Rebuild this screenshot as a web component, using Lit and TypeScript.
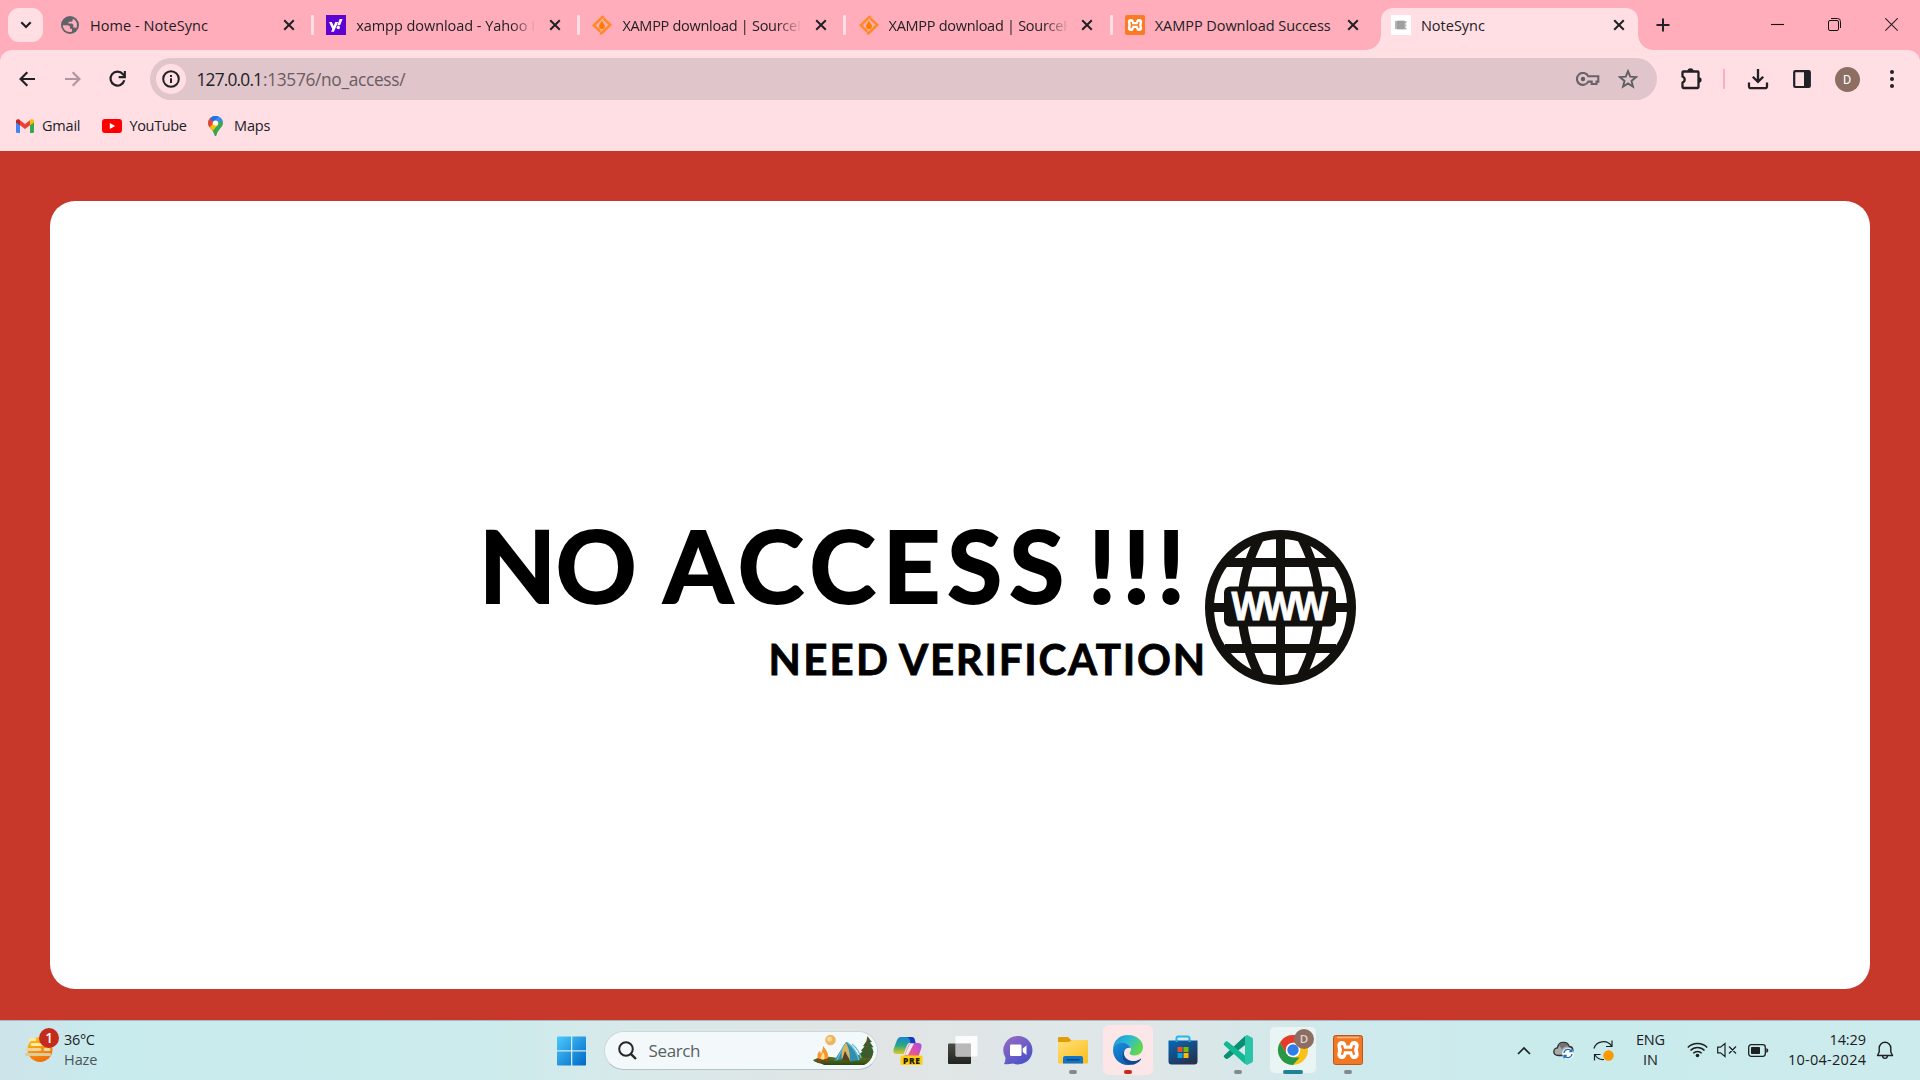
import { LitElement, html, css, svg } from "lit";
import { customElement, property } from "lit/decorators.js";

/** Single line of text, tracked so that its advance fills a given width. */
@customElement("fit-text")
class FitText extends LitElement {
  static styles = css`
    :host { display: inline-block; white-space: pre; flex: none; }
  `;
  @property() text = "";
  @property({ type: Number }) w = 0;
  render() {
    return html`<span class="run">${this.text}</span>`;
  }
  updated() {
    const run = this.renderRoot.querySelector(".run") as HTMLElement;
    this.style.letterSpacing = "0px";
    const natural = run.getBoundingClientRect().width;
    const gaps = Math.max(1, this.text.length - 1);
    this.style.letterSpacing = `${(this.w - natural) / gaps}px`;
    this.style.width = `${this.w}px`;
  }
}

const xampp = (ground: string) => svg`
  <g fill="none" stroke-linecap="round" stroke-linejoin="round">
    <path d="M8.800 10.400l1 4.600-1 4.600M21.200 10.400l-1 4.600 1 4.600M9.300 15h11.400" stroke="#fff" stroke-width="9"/>
    <path d="M10 15h10M9.200 11.200l1 3.800-1 3.800M20.800 11.200l-1 3.800 1 3.800" stroke="${ground}" stroke-width="2.300"/>
  </g>`;

const sourceforge = svg`
  <g fill="none" stroke="#ff8a26" stroke-width="2.600" stroke-linejoin="miter">
    <path d="M12.100 2.200 10.500 1.900 1.800 10.300 8.300 16.600"/>
    <path d="M7.900 18 9.500 18.300 18.200 9.900 11.700 3.600"/>
  </g>
  <path d="M10 5.400c.4 2.400 3 3.400 3 5.900 0 1.700-1.300 3-3 3s-3-1.300-3-3c0-1.600.9-2.200 1.400-3.100.5-.9.400-1.600 1.600-2.800z" fill="#ff8000"/>`;

const favicons: Record<string, unknown> = {
  globe: svg`<svg class="fav" viewBox="0 0 20 20"><circle cx="10" cy="10" r="9" fill="#5f6368"/>
    <path d="M2.900 10.300h4.300c1.800 0 2.800.9 2.800 2.200v1.300h1.900v2.900c-4.500 1.300-9-1.600-9-6.400zM12.700 3.800C15.400 5 17 7.300 17 10c0 1.200-.3 2.300-.9 3.300-.4-.6-.9-.8-1.600-.8h-1.200v-2.100c0-1.200-.8-1.900-2-1.900H8.600V6.800h2.500c1.200 0 1.600-.7 1.600-1.700z" fill="#ffadbb"/></svg>`,
  yahoo: svg`<svg class="fav" viewBox="0 0 20 20"><path d="M0 0h20v20H0z" fill="#5f01d1"/>
    <path d="M3 6.900h2.900l1.700 4.200 1.700-4.200h2.800L7.900 16.700H5.100l1.200-2.700z" fill="#fff"/>
    <path d="M13.600 4h3l-2.500 6.300h-2.800z" fill="#fff"/><circle cx="12.300" cy="12.500" r="1.700" fill="#fff"/></svg>`,
  sf: svg`<svg class="fav" viewBox="0 0 20 20">${sourceforge}</svg>`,
  xampp: svg`<svg class="fav" viewBox="0 0 30 30"><rect width="30" height="30" rx="3" fill="#fb7a24"/>${xampp("#fb7a24")}</svg>`,
  note: svg`<svg class="fav" viewBox="0 0 20 20"><path d="M0 0h20v20H0z" fill="#fff"/>
    <rect x="5.500" y="5.500" width="8.500" height="9" rx="1" fill="#b9b9b9"/><path d="M5.500 7h8M5.500 9h8M5.500 11h8M5.500 13h8M4.800 6v8M14.800 6v2.500M14.800 9.500v2M14.800 12.500v2" stroke="#777" stroke-width=".8"/></svg>`,
};

const tabs = [
  { icon: "globe", text: "Home - NoteSync", w: 118 },
  { icon: "yahoo", text: "xampp download - Yahoo I", w: 179 },
  { icon: "sf", text: "XAMPP download | SourceF", w: 182 },
  { icon: "sf", text: "XAMPP download | SourceF", w: 182 },
  { icon: "xampp", text: "XAMPP Download Success", w: 176 },
  { icon: "note", text: "NoteSync", w: 64, active: true },
];

@customElement("browser-frame")
class BrowserFrame extends LitElement {
  static styles = css`
    :host { display: block; height: 151px; background: #ffadbb; color: #202124;
      font-family: "Open Sans", "Noto Sans", sans-serif; font-size: 14.5px; }
    svg { display: block; flex: none; }
    .strip { display: flex; height: 50px; }
    .search { width: 35px; height: 34px; margin: 8px 6.500px 0 8px; border-radius: 11px; background: #ffdee4;
      display: flex; align-items: center; justify-content: center; }
    .tab { display: flex; align-items: center; width: 266.200px; box-sizing: border-box; padding-left: 10.500px; flex: none; }
    .fav { width: 20px; height: 20px; margin-right: 10px; }
    .title { width: 178px; padding-top: 2px; line-height: 24px; height: 24px; flex: none; }
    .fade { mask-image: linear-gradient(90deg, #000 155px, transparent 180px); }
    .x { width: 12px; height: 12px; margin-left: 14.500px; }
    .sep { width: 3px; height: 20px; border-radius: 1px; background: #ffdee4; margin-left: 16.500px; }
    .active { width: 257.500px; height: 42px; margin: 8px 0 0 .500px; padding-left: 10px; padding-bottom: 8px;
      background: #ffdee4; border-radius: 12px 12px 0 0; position: relative; }
    .active .x { margin-left: 14px; }
    .active::before, .active::after { content: ""; position: absolute; bottom: 0; width: 15px; height: 15px; }
    .active::before { left: -15px; background: radial-gradient(circle at 0 0, transparent 14.500px, #ffdee4 15px); }
    .active::after { right: -15px; background: radial-gradient(circle at 100% 0, transparent 14.500px, #ffdee4 15px); }
    .plus { margin: 18px 0 0 17.500px; width: 14px; height: 14px; }
    .window { margin: 18px 22px 0 auto; display: flex; gap: 44px; }
    .bar { height: 101px; background: #ffdee4; border-radius: 12px 12px 0 0; }
    .tools { display: flex; align-items: center; height: 42px; padding: 8px 0 0 17px; }
    .nav { display: flex; gap: 25.500px; align-items: center; width: 133px; }
    .omni { width: 1507px; height: 42px; box-sizing: border-box; border-radius: 21px; background: #e0c5ca; display: flex;
      align-items: center; padding: 0 19px 0 6px; font-size: 17.300px; }
    .info { width: 30px; height: 30px; border-radius: 50%; background: #ffdee4; display: grid; place-items: center; margin-right: 10.500px; }
    .path { color: #6a5c62; }
    .omni fit-text { padding-top: 1px; }
    .right { margin-left: auto; display: flex; gap: 18px; align-items: center; }
    .ext { margin-left: 23px; }
    .rule { width: 2px; height: 20px; background: #ffadbb; margin: 0 21.500px 0 20px; }
    .panel { margin-left: 24px; }
    .avatar { width: 25px; height: 25px; border-radius: 50%; background: #8d6e63; color: #fff; font: 12.500px/25px Roboto, sans-serif;
      text-align: center; margin: 0 29.500px 0 24px; }
    .marks { display: flex; align-items: center; height: 51px; padding-left: 16px; }
    .marks fit-text { margin-right: 21px; }
    .gap8 { margin-right: 8px; }
    .gap11 { margin-right: 11px; }
  `;
  render() {
    return html`
      <div class="strip">
        <div class="search"><svg width="12" height="8" viewBox="0 0 12 8"><path d="M1.300 1.300 6 6l4.700-4.700" fill="none" stroke="#202124" stroke-width="2.200"/></svg></div>
        ${tabs.map((t, i) => html`
          <div class="tab ${t.active ? "active" : ""}">
            ${favicons[t.icon]}
            <div class="title ${i > 0 && i < 4 ? "fade" : ""}"><fit-text .text=${t.text} .w=${t.w}></fit-text></div>
            <svg class="x" viewBox="0 0 12 12"><path d="M1.200 1.200l9.600 9.600M10.800 1.200 1.200 10.800" stroke="#202124" stroke-width="2"/></svg>
            ${i < 4 ? html`<div class="sep"></div>` : ""}
          </div>`)}
        <svg class="plus" viewBox="0 0 14 14"><path d="M7 .5v13M.5 7h13" stroke="#202124" stroke-width="2"/></svg>
        <div class="window">
          <svg width="13" height="14" viewBox="0 0 13 14"><path d="M0 6.500h13" stroke="#111" stroke-width="1.100"/></svg>
          <svg width="13" height="14" viewBox="0 0 13 14"><g fill="none" stroke="#111"><rect x=".5" y="2.500" width="10" height="10" rx="1.500"/><path d="M3 .5h6.500a3 3 0 0 1 3 3V10"/></g></svg>
          <svg width="13" height="14" viewBox="0 0 13 14"><path d="M.3.300l12.400 12.400M12.700.300.300 12.700" stroke="#222" stroke-width="1.100"/></svg>
        </div>
      </div>
      <div class="bar">
        <div class="tools">
          <div class="nav">
            <svg width="20" height="20" viewBox="0 0 20 20"><path d="M18 10H4M10.300 3.300 3.600 10l6.700 6.700" fill="none" stroke="#202124" stroke-width="2.200"/></svg>
            <svg width="20" height="20" viewBox="0 0 20 20"><path d="M2 10h14M9.700 3.300l6.700 6.700-6.700 6.700" fill="none" stroke="#ae989e" stroke-width="2.200"/></svg>
            <svg width="20" height="20" viewBox="0 0 20 20"><path d="M16.300 11.300A7 7 0 1 1 15 5.200l1.500 1.600" fill="none" stroke="#202124" stroke-width="2.200"/><path d="M17.900 2v7.200h-7.200V7.100h5.100V2z" fill="#202124"/></svg>
          </div>
          <div class="omni">
            <div class="info"><svg width="18" height="18" viewBox="0 0 18 18"><circle cx="9" cy="9" r="7.800" fill="none" stroke="#202124" stroke-width="2"/><path d="M8 8.200h2V13H8zM8 5h2v2H8z" fill="#202124"/></svg></div>
            <fit-text .text=${"127.0.0.1"} .w=${66.5}></fit-text><fit-text class="path" .text=${":13576/no_access/"} .w=${142.5}></fit-text>
            <div class="right">
              <svg width="24" height="14" viewBox="0 0 24 14"><path d="M12.300 4.200h10v5.400h-1.800V12h-4.800V9.600h-3.400A6 6 0 1 1 12.300 4.200z" fill="none" stroke="#6a6266" stroke-width="2.100"/><circle cx="7" cy="7" r="2.200" fill="#5f5f63"/></svg>
              <svg width="20" height="20" viewBox="0 0 20 20"><path d="M10 2.200l2.200 5.500 5.900.4-4.600 3.800 1.500 5.800-5-3.200-5 3.200 1.500-5.800L1.900 8.100l5.900-.4z" fill="none" stroke="#5f6063" stroke-width="1.900"/></svg>
            </div>
          </div>
          <svg class="ext" width="23" height="22" viewBox="0 0 23 22"><path d="M3.500 3.500h14a1 1 0 0 1 1 1v14.500a1 1 0 0 1-1 1h-14a1 1 0 0 1-1-1v-4.300a3.300 3.300 0 0 0 0-6.200V4.500a1 1 0 0 1 1-1z" fill="none" stroke="#202124" stroke-width="2.300"/><path d="M7.500 3.200a3 3 0 0 1 6 0zM18.800 9.200a2.800 2.800 0 0 1 0 5.600z" fill="#202124"/></svg>
          <div class="rule"></div>
          <svg width="22" height="22" viewBox="0 0 22 22"><path d="M2 14.500v4a1.700 1.700 0 0 0 1.700 1.700h14.600a1.700 1.700 0 0 0 1.700-1.700v-4M11 1v12.500M5.800 8.700 11 13.900l5.200-5.200" fill="none" stroke="#202124" stroke-width="2.300"/></svg>
          <svg class="panel" width="18" height="20" viewBox="0 0 18 20"><rect x="1.200" y="2.200" width="15.600" height="15.800" rx="1" fill="none" stroke="#202124" stroke-width="2.200"/><path d="M11 2h6v16h-6z" fill="#202124"/></svg>
          <div class="avatar">D</div>
          <svg width="6" height="20" viewBox="0 0 6 20"><g fill="#202124"><circle cx="3" cy="3" r="2"/><circle cx="3" cy="10" r="2"/><circle cx="3" cy="17" r="2"/></g></svg>
        </div>
        <div class="marks">
          <svg class="gap8" width="18" height="14" viewBox="0 0 18 14"><path d="M0 2h4v12H1.200A1.200 1.200 0 0 1 0 12.800z" fill="#4285f4"/><path d="M14 2h4v10.800a1.200 1.200 0 0 1-1.200 1.200H14z" fill="#34a853"/><path d="M4 1.300 9 5l5-3.700v5L9 10 4 6.300z" fill="#ea4335"/><path d="M0 2C0 .4 2-.4 3.300.6L4 1.200v5.100L0 3.400z" fill="#c5221f"/><path d="M18 2c0-1.600-2-2.400-3.300-1.400l-.7.600v5.100l4-2.900z" fill="#fbbc04"/></svg>
          <fit-text .text=${"Gmail"} .w=${38.5}></fit-text>
          <svg class="gap8" width="20" height="14" viewBox="0 0 20 14"><rect width="20" height="14" rx="3" fill="#f00"/><path d="M7.800 4 13.200 7 7.800 10z" fill="#fff"/></svg>
          <fit-text .text=${"YouTube"} .w=${57.5}></fit-text>
          <svg class="gap11" width="15" height="20" viewBox="0 0 14 20" preserveAspectRatio="none"><defs><clipPath id="pin"><path d="M7 0a7 7 0 0 1 7 7c0 4.500-5 6.200-6 12.200-.3 1.100-1.700 1.100-2 0C5 13.200 0 11.500 0 7a7 7 0 0 1 7-7z"/></clipPath></defs><g clip-path="url(#pin)"><path d="M0 0h14v20H0z" fill="#34a853"/><path d="M0 0h14L7 7z" fill="#4285f4"/><path d="M0 0 7 7 2 13H0z" fill="#ea4335"/><path d="M2 2 5 0h5l-5 6z" fill="#1a73e8"/><path d="M1 12 6 6l4 2-6.500 8z" fill="#fbbc04"/><path d="M9 5l3-4 2 3v2z" fill="#4285f4"/></g><circle cx="7" cy="7" r="2.600" fill="#fff"/></svg>
          <fit-text .text=${"Maps"} .w=${36.5}></fit-text>
        </div>
      </div>`;
  }
}

@customElement("no-access")
class NoAccess extends LitElement {
  static styles = css`
    :host { display: block; height: 869px; background: #c7382a; box-sizing: border-box; padding: 50px 50px 31px; }
    .card { height: 788px; border-radius: 25px; background: #fff; display: flex; box-sizing: border-box; padding: 313px 0 0 428.500px;
      font-family: Lato, "Open Sans", sans-serif; font-weight: 700; color: #000; }
    .words { width: 726.500px; display: flex; flex-direction: column; }
    .big { display: flex; font-size: 100px; line-height: 101px; height: 122.500px; -webkit-text-stroke: 2px #000; }
    .small { display: flex; gap: 11px; font-size: 42px; line-height: 44px; align-self: flex-end; -webkit-text-stroke: .800px #000; }
    .no { margin-left: .500px; }
    .access { margin: 0 24px 0 27px; }
    .world { margin-top: 16px; width: 151px; height: 155px; flex: none; display: block; }
    .www { font: 700 39px "Open Sans", sans-serif; letter-spacing: -3px; }
  `;
  render() {
    return html`<div class="card">
      <div class="words">
        <div class="big">
          <fit-text class="no" .text=${"NO"} .w=${157.5}></fit-text>
          <fit-text class="access" .text=${"ACCESS"} .w=${400.5}></fit-text>
          <fit-text .text=${"!!!"} .w=${97}></fit-text>
        </div>
        <div class="small">
          <fit-text .text=${"NEED"} .w=${119.5}></fit-text>
          <fit-text .text=${"VERIFICATION"} .w=${306}></fit-text>
        </div>
      </div>
      <svg class="world" viewBox="0 0 151 155">
        <g fill="none" stroke="#12110e" stroke-width="9">
          <ellipse cx="75.500" cy="77.500" rx="71" ry="73"/>
          <path d="M75.500 4v147M20 32.500h111M20 118.500h111M5 77.500h141"/>
          <path d="M54 9Q19 77 55 147M97 9Q132 77 96 147"/>
        </g>
        <rect x="19" y="56.500" width="112" height="40" rx="6" fill="#12110e"/>
        <text class="www" transform="translate(26.500 90) scale(.9 1)" fill="#fff" stroke="#fff" stroke-width=".8">WWW</text>
      </svg>
    </div>`;
  }
}

@customElement("task-bar")
class TaskBar extends LitElement {
  static styles = css`
    :host { display: flex; height: 60px; box-sizing: border-box; border-top: 1px solid #aab9bb; align-items: center; color: #1d2022;
      background: linear-gradient(90deg, #cde3e9 0, #c8ebed 100px, #cbebec 480px, #d7e9ea 620px, #e1e4e4 860px, #dfe7e8 1060px, #e0e6e7 1140px, #cfe9ec 1330px, #c9ebec 1560px, #ccebed 1920px);
      font-family: "Open Sans", "Noto Sans", sans-serif; font-size: 14.500px; line-height: 20px; }
    svg { display: block; flex: none; }
    .weather { display: flex; align-items: flex-start; width: 532px; padding-left: 25px; box-sizing: border-box; height: 46px; flex: none; }
    .temp { display: flex; flex-direction: column; padding: 2px 0 0 4px; }
    .haze { color: #4b5559; }
    .app { width: 50px; height: 50px; display: grid; place-items: center; position: relative; border-radius: 6px; margin-right: 5px; flex: none; }
    .app svg { width: 30px; height: 30px; overflow: visible; }
    .dot::after { content: ""; position: absolute; left: 21px; bottom: 1px; width: 8px; height: 4px; border-radius: 2px; background: #838a8b; }
    .edge { background: #fde6e8; }
    .edge::after { background: #c42b1c; }
    .chrome { background: #e9f4f5; box-shadow: inset 0 0 0 1px #d9e5e6; width: 48px; height: 48px; margin: 1px 6px 0 1px; }
    .chrome::after { left: 14px; bottom: 0; width: 20px; background: #1f8295; }
    .find { width: 274px; height: 39px; box-sizing: border-box; border-radius: 20px; background: #f3f9fa; border: 1px solid #cbd8da; border-bottom-color: #b4c2c5;
      display: flex; align-items: center; padding: 0 2px 0 13px; margin: -1px 5.500px 0 16.500px; flex: none; font-size: 17px; color: #5a5f61; }
    .find fit-text { margin-left: 12px; padding-top: 1px; }
    .apps { display: flex; margin-top: -1px; }
    .camp { margin-left: auto; width: 63px; height: 32px; }
    .tray { margin-left: auto; display: flex; align-items: center; padding-right: 26px; flex: none; margin-top: -1px; }
    .lang { display: flex; flex-direction: column; align-items: center; width: 30px; margin: 0 21px 0 22px; }
    .clock { display: flex; flex-direction: column; align-items: flex-end; width: 80px; margin: 0 10px 0 17px; }
    .drive { margin-left: 22px; margin-right: 19px; }
    .vol { margin: 0 11px 0 9.500px; }
  `;
  render() {
    return html`
      <div class="weather">
        <svg width="35" height="36" viewBox="0 0 35 36"><defs><linearGradient id="sun" x1="0" y1="0" x2=".4" y2="1"><stop offset="0" stop-color="#fcc60a"/><stop offset="1" stop-color="#f2700c"/></linearGradient></defs>
          <circle cx="15" cy="21.500" r="12.500" fill="url(#sun)"/>
          <g stroke-width="3" stroke-linecap="round"><path d="M5 11.500h5M7 16.500h12" stroke="#fde9a8"/><path d="M2 21.500h13M20 21.500h4" stroke="#ead6a0"/><path d="M1.500 26.500h23" stroke="#dccb9c"/></g>
          <circle cx="24" cy="10" r="10" fill="#c42b1c"/><text x="24" y="15" text-anchor="middle" fill="#fff" font-size="13.500" font-weight="600">1</text></svg>
        <div class="temp"><fit-text .text=${"36°C"} .w=${31}></fit-text><fit-text class="haze" .text=${"Haze"} .w=${33.5}></fit-text></div>
      </div>
      <svg width="55" height="30" viewBox="0 0 55 30"><defs><linearGradient id="win" x1="0" y1="0" x2="1" y2="1"><stop offset="0" stop-color="#4cc9fd"/><stop offset="1" stop-color="#0067c6"/></linearGradient></defs>
        <path d="M26 .5h13v13.700H25V1.500a1 1 0 0 1 1-1zM40.300.500H53a1 1 0 0 1 1 1v12.700H40.300zM25 15.500h14v14H26a1 1 0 0 1-1-1zM40.300 15.500H54v13a1 1 0 0 1-1 1H40.300z" fill="url(#win)"/></svg>
      <div class="find">
        <svg width="19" height="19" viewBox="0 0 19 19"><circle cx="8" cy="8" r="6.800" fill="none" stroke="#262626" stroke-width="2"/><path d="M12.800 12.800 18 18" stroke="#262626" stroke-width="2.400"/></svg>
        <fit-text .text=${"Search"} .w=${52}></fit-text>
        <svg class="camp" viewBox="0 0 63 32"><defs><linearGradient id="hill" x1="0" y1="0" x2="0" y2="1"><stop offset="0" stop-color="#8fa43a"/><stop offset="1" stop-color="#2c4a10"/></linearGradient></defs>
          <path d="M1 26c8-4 16-4 24-2l28-4c5-3 8-6 8-6 1 7-2 14-9 17H12c-3-2-9-2-11-5z" fill="url(#hill)"/>
          <circle cx="18.500" cy="6" r="5.300" fill="#eeb65c"/><circle cx="17.500" cy="5" r="2.600" fill="#f8d690"/>
          <path d="M55.500 2c2 3 3 4 4.500 6l-2 .3 3.500 5-2 .2 2 4.500-2 6h-8l-4-4 3-2.500-1.500-1 3.500-4-1.500-.5 3.500-5z" fill="#365f2e"/><path d="M55.500 4v24" stroke="#6a4a23" stroke-width="1.200"/>
          <path d="M33.500 8.500 22 27l9-2 3-7 4 9.500 10-1.500c-2-7-7-14-13-18z" fill="#2f8fb0"/><path d="M34 8.500c-4 6-5 11-4 17l4-8 4 10c0-8-1-13-4-19z" fill="#dcb55e"/><path d="M36 9c5 4 9 10 11 17M40 10c5 4 8 10 9 14M32 11l-7 15" stroke="#70bed2" stroke-width="1.200" fill="none"/><path d="M33 17l-3 9 8 1z" fill="#57411f"/>
          <path d="M11 12c4 5 7 9 4 15H7c-3-5-1-9 1-10l1 3c1-3 2-5 2-8z" fill="#f3962b"/><path d="M11 18c2 3 2 6 1 8H9c-1-3 1-5 2-8z" fill="#fbe08a"/><path d="M5 25l12 3M5 28l12-3" stroke="#75421b" stroke-width="1.800"/></svg>
      </div>
      <div class="apps">
      <div class="app"><svg viewBox="0 0 30 30"><defs><linearGradient id="co1" x1="0" y1="0" x2="0" y2="1"><stop offset="0" stop-color="#1785d8"/><stop offset=".5" stop-color="#2ba783"/><stop offset="1" stop-color="#e7c91b"/></linearGradient><linearGradient id="co2" x1="1" y1="0" x2="0" y2="1"><stop offset="0" stop-color="#a94bea"/><stop offset=".5" stop-color="#e0539f"/><stop offset="1" stop-color="#f97c4a"/></linearGradient></defs>
        <path d="M8 2h11c2 0 3 2 3.500 6h-6c-3 0-4 8-6 11H4c-4 0-4-3-3-6L4 5c1-2 2-3 4-3z" fill="url(#co1)"/><path d="M14 2h5c2 0 3 2 3.500 6h-5C17 4 16 3 14 2z" fill="#1439c4"/><path d="M19 8h6c4 0 4 3 3 6l-3 9H10c3-2 4-15 9-15z" fill="url(#co2)"/><path d="M18 8.500h3L15 20h-3c2-4 3-9 6-11.500z" fill="#f4e9f3"/>
        <rect x="7.500" y="20.500" width="22" height="9.500" rx="1.500" fill="#fccf16"/><text x="10" y="28.500" font-size="8.500" font-weight="800" fill="#221b00" textLength="17">PRE</text></svg></div>
      <div class="app"><svg viewBox="0 0 30 30"><defs><linearGradient id="tv" x1="0" y1="0" x2="0" y2="1"><stop offset="0" stop-color="#4a4a48"/><stop offset="1" stop-color="#22221f"/></linearGradient></defs>
        <rect x="0" y="8.500" width="23" height="20.500" rx="1" fill="url(#tv)"/><rect x="7.500" y="1" width="22" height="20.500" rx="1" fill="#fff" opacity=".85"/><path d="M8 8.500h15v13H8z" fill="#b9b9b9"/></svg></div>
      <div class="app"><svg viewBox="0 0 30 30"><defs><linearGradient id="chat" x1="0" y1="0" x2=".7" y2="1"><stop offset="0" stop-color="#9a6bc4"/><stop offset="1" stop-color="#4a53c8"/></linearGradient></defs>
        <path d="M15 1a14.200 14.200 0 1 1-5 27.400c-3 .8-6 1-9 .6 1-2 1.500-3 1.400-6.500A14.200 14.200 0 0 1 15 1z" fill="url(#chat)"/><rect x="7" y="9.500" width="11.500" height="11.500" rx="1.200" fill="#fff"/><path d="M19.700 13.500 23.500 10.500v9.500l-3.800-3z" fill="#fff"/></svg></div>
      <div class="app dot"><svg viewBox="0 0 30 30"><defs><linearGradient id="fold" x1="0" y1="0" x2=".8" y2="1"><stop offset="0" stop-color="#ffe078"/><stop offset="1" stop-color="#fbbf22"/></linearGradient></defs>
        <path d="M0 3.500C0 2.600.6 2 1.500 2H10l3 3h17v6H0z" fill="#e29d05"/><path d="M0 7h11l3-2h16v22.500a1 1 0 0 1-1 1H1a1 1 0 0 1-1-1z" fill="url(#fold)"/><path d="M5 28.500V23a2 2 0 0 1 2-2h16a2 2 0 0 1 2 2v5.500z" fill="#1274c9"/><path d="M8.500 24.800h13" stroke="#0a3f78" stroke-width="1.300"/></svg></div>
      <div class="app dot edge"><svg viewBox="0 0 30 30"><defs><linearGradient id="e1" x1="0" y1="0" x2="1" y2=".5"><stop offset="0" stop-color="#1b95d4"/><stop offset=".5" stop-color="#2bb9d6"/><stop offset="1" stop-color="#62d94b"/></linearGradient><linearGradient id="e2" x1="0" y1="0" x2=".6" y2="1"><stop offset="0" stop-color="#1b8fdd"/><stop offset="1" stop-color="#0c5fae"/></linearGradient></defs>
        <path d="M0 15C0 6 6 0 15 0s15 6 15 12c0 5-4 8.500-8.500 8.500-3.500 0-5-1.500-5-2.500 0-.8 1.500-1.500 1.500-3.500 0-3-3-5.500-8-5.500C4 9 1 12 0 15z" fill="url(#e1)"/><path d="M0 15c1-5 6-8 11-7 3.500.7 6 3 6.500 5-4-1-7 2-6.500 6.500.5 5 5 9.500 9 9.300C18 30 16 30 15 30 6 30 0 23 0 15z" fill="url(#e2)"/><path d="M11.500 15.500c-3 8 6 11 10 10.500 3-.4 4.500-1.500 6-2.300.6-.3.900.1.500.7-2.500 3.500-7 5.600-10 5.200C11 28.500 7 22 11.500 15.500z" fill="#114a94"/></svg></div>
      <div class="app"><svg viewBox="0 0 30 30"><defs><linearGradient id="bag" x1="0" y1="0" x2=".6" y2="1"><stop offset="0" stop-color="#0669b8"/><stop offset="1" stop-color="#243352"/></linearGradient></defs>
        <path d="M8.500 7V3.500a2 2 0 0 1 2-2h9a2 2 0 0 1 2 2V7" fill="none" stroke="#27b5ee" stroke-width="2"/><path d="M.5 5.500h29v21a3 3 0 0 1-3 3h-23a3 3 0 0 1-3-3z" fill="url(#bag)"/><path d="M8.500 5.500v1.500M21.500 5.500v1.500" stroke="#27b5ee" stroke-width="2"/>
        <path d="M9.500 12h5v5h-5z" fill="#f25022"/><path d="M15.500 12h5v5h-5z" fill="#7fba00"/><path d="M9.500 18h5v5h-5z" fill="#00a4ef"/><path d="M15.500 18h5v5h-5z" fill="#ffb900"/></svg></div>
      <div class="app dot"><svg viewBox="0 0 30 30"><path d="M22 1 1 20.500c-1 1 .5 2 1.500 3s2 .5 3-.3L22 10z" fill="#0a8f74"/><path d="M22 29 1 10c-1-1 .5-2.300 1.500-3.300s2-.3 3 .5L22 20.500z" fill="#12b893"/><path d="M22 1.200 24 0l5 2.500c.6.300 1 1 1 1.500v22c0 .6-.4 1.200-1 1.500L24 30l-2-1.200z" fill="#2bc4a8"/></svg></div>
      <div class="app dot chrome"><svg viewBox="0 0 30 30"><circle cx="15" cy="15" r="15" fill="#fbc116"/><path d="M2 7.500A15 15 0 0 1 28 7.500H15L8.500 18.700z" fill="#e33b2e"/><path d="M2 7.500 8.500 18.700h0L15 22.500h6.500L15 30A15 15 0 0 1 2 7.500z" fill="#279847"/><circle cx="15" cy="15" r="7.300" fill="#fff"/><circle cx="15" cy="15" r="5.700" fill="#2f7de9"/>
        <circle cx="26" cy="4" r="10" fill="#8d6e63"/><text x="26" y="8.400" text-anchor="middle" font-size="11.500" font-weight="600" fill="#e2d6d1">D</text></svg></div>
      <div class="app dot"><svg viewBox="0 0 30 30"><rect x=".5" y=".5" width="29" height="29" rx="2" fill="#f37623" stroke="#b9581a"/><path d="M4 2.500h22" stroke="#f9b98a" stroke-width="1.500"/>${xampp("#f37623")}</svg></div>
      </div>
      <div class="tray">
        <svg width="14" height="9" viewBox="0 0 14 9"><path d="M1 8l6-6 6 6" fill="none" stroke="#1d2022" stroke-width="1.600"/></svg>
        <svg class="drive" width="21" height="18" viewBox="0 0 21 18"><path d="M5.500 14.500C2 14.500.8 12.500.8 10.500S2.500 6.800 4.500 6.800C5 3.500 7.500 1.500 10.500 1.500c3 0 5 1.800 5.700 4 2.500 0 3.800 2 3.800 4.500s-1 4.500-4 4.500z" fill="#aaa" stroke="#2b2b2b" stroke-width="1.300"/><path d="M5.500 3.500c4-3 9-2 10.500 2-3-1-6 1-7 3C8 6 6 5.500 5.500 3.500z" fill="#737373"/><circle cx="15" cy="12.500" r="5.800" fill="#fff"/><path d="M11 12a4.200 4.200 0 0 1 7.500-2M19 13a4.200 4.200 0 0 1-7.500 2M19 7.800v2.700h-2.700M11 17.200v-2.700h2.700" fill="none" stroke="#1b6fc2" stroke-width="1.300"/></svg>
        <svg width="21" height="21" viewBox="0 0 21 21"><path d="M1 8.500C3 1 14-1 18.500 6M19 .5V6.500h-6M11 19.500C7 20 4 18 2 15M1.500 20.500V14.500h6" fill="none" stroke="#1d2022" stroke-width="1.200"/><circle cx="15.500" cy="15.500" r="5.200" fill="#fd9800"/></svg>
        <div class="lang"><fit-text .text=${"ENG"} .w=${29}></fit-text><fit-text .text=${"IN"} .w=${15}></fit-text></div>
        <svg width="21" height="16" viewBox="0 0 21 16"><g fill="none" stroke="#1d2022" stroke-width="1.500"><path d="M.8 5.500c5.500-5.300 14-5.300 19.400 0M3.500 8.500c4-4 10-4 14 0M6.300 11.300c2.500-2.500 6-2.500 8.400 0"/></g><circle cx="10.500" cy="13.500" r="1.800" fill="#1d2022"/></svg>
        <svg class="vol" width="20" height="16" viewBox="0 0 20 16"><path d="M.7 5.200h2.800L8 1.500v13l-4.500-3.700H.7zM12 4.500l7 7M19 4.500l-7 7" fill="none" stroke="#1d2022" stroke-width="1.200"/></svg>
        <svg width="21" height="13" viewBox="0 0 21 13"><rect x=".7" y=".7" width="16.600" height="11.600" rx="2.500" fill="none" stroke="#1d2022" stroke-width="1.300"/><rect x="3" y="3" width="9" height="7" rx=".8" fill="#1d2022"/><path d="M18.300 4.300c2.600 0 2.600 4.400 0 4.400z" fill="#1d2022"/></svg>
        <div class="clock"><fit-text .text=${"14:29"} .w=${36.5}></fit-text><fit-text .text=${"10-04-2024"} .w=${78}></fit-text></div>
        <svg width="18" height="19" viewBox="0 0 18 19"><path d="M1.500 14.500 3.200 11V7a5.800 5.800 0 0 1 11.600 0v4l1.700 3.500zM6.500 14.800c.3 3.400 4.700 3.400 5 0" fill="none" stroke="#1d2022" stroke-width="1.400" stroke-linejoin="round"/></svg>
      </div>`;
  }
}

@customElement("app-root")
class AppRoot extends LitElement {
  static styles = css`:host { display: block; width: 1920px; height: 1080px; overflow: hidden; }`;
  render() {
    return html`<browser-frame></browser-frame><no-access></no-access><task-bar></task-bar>`;
  }
}
